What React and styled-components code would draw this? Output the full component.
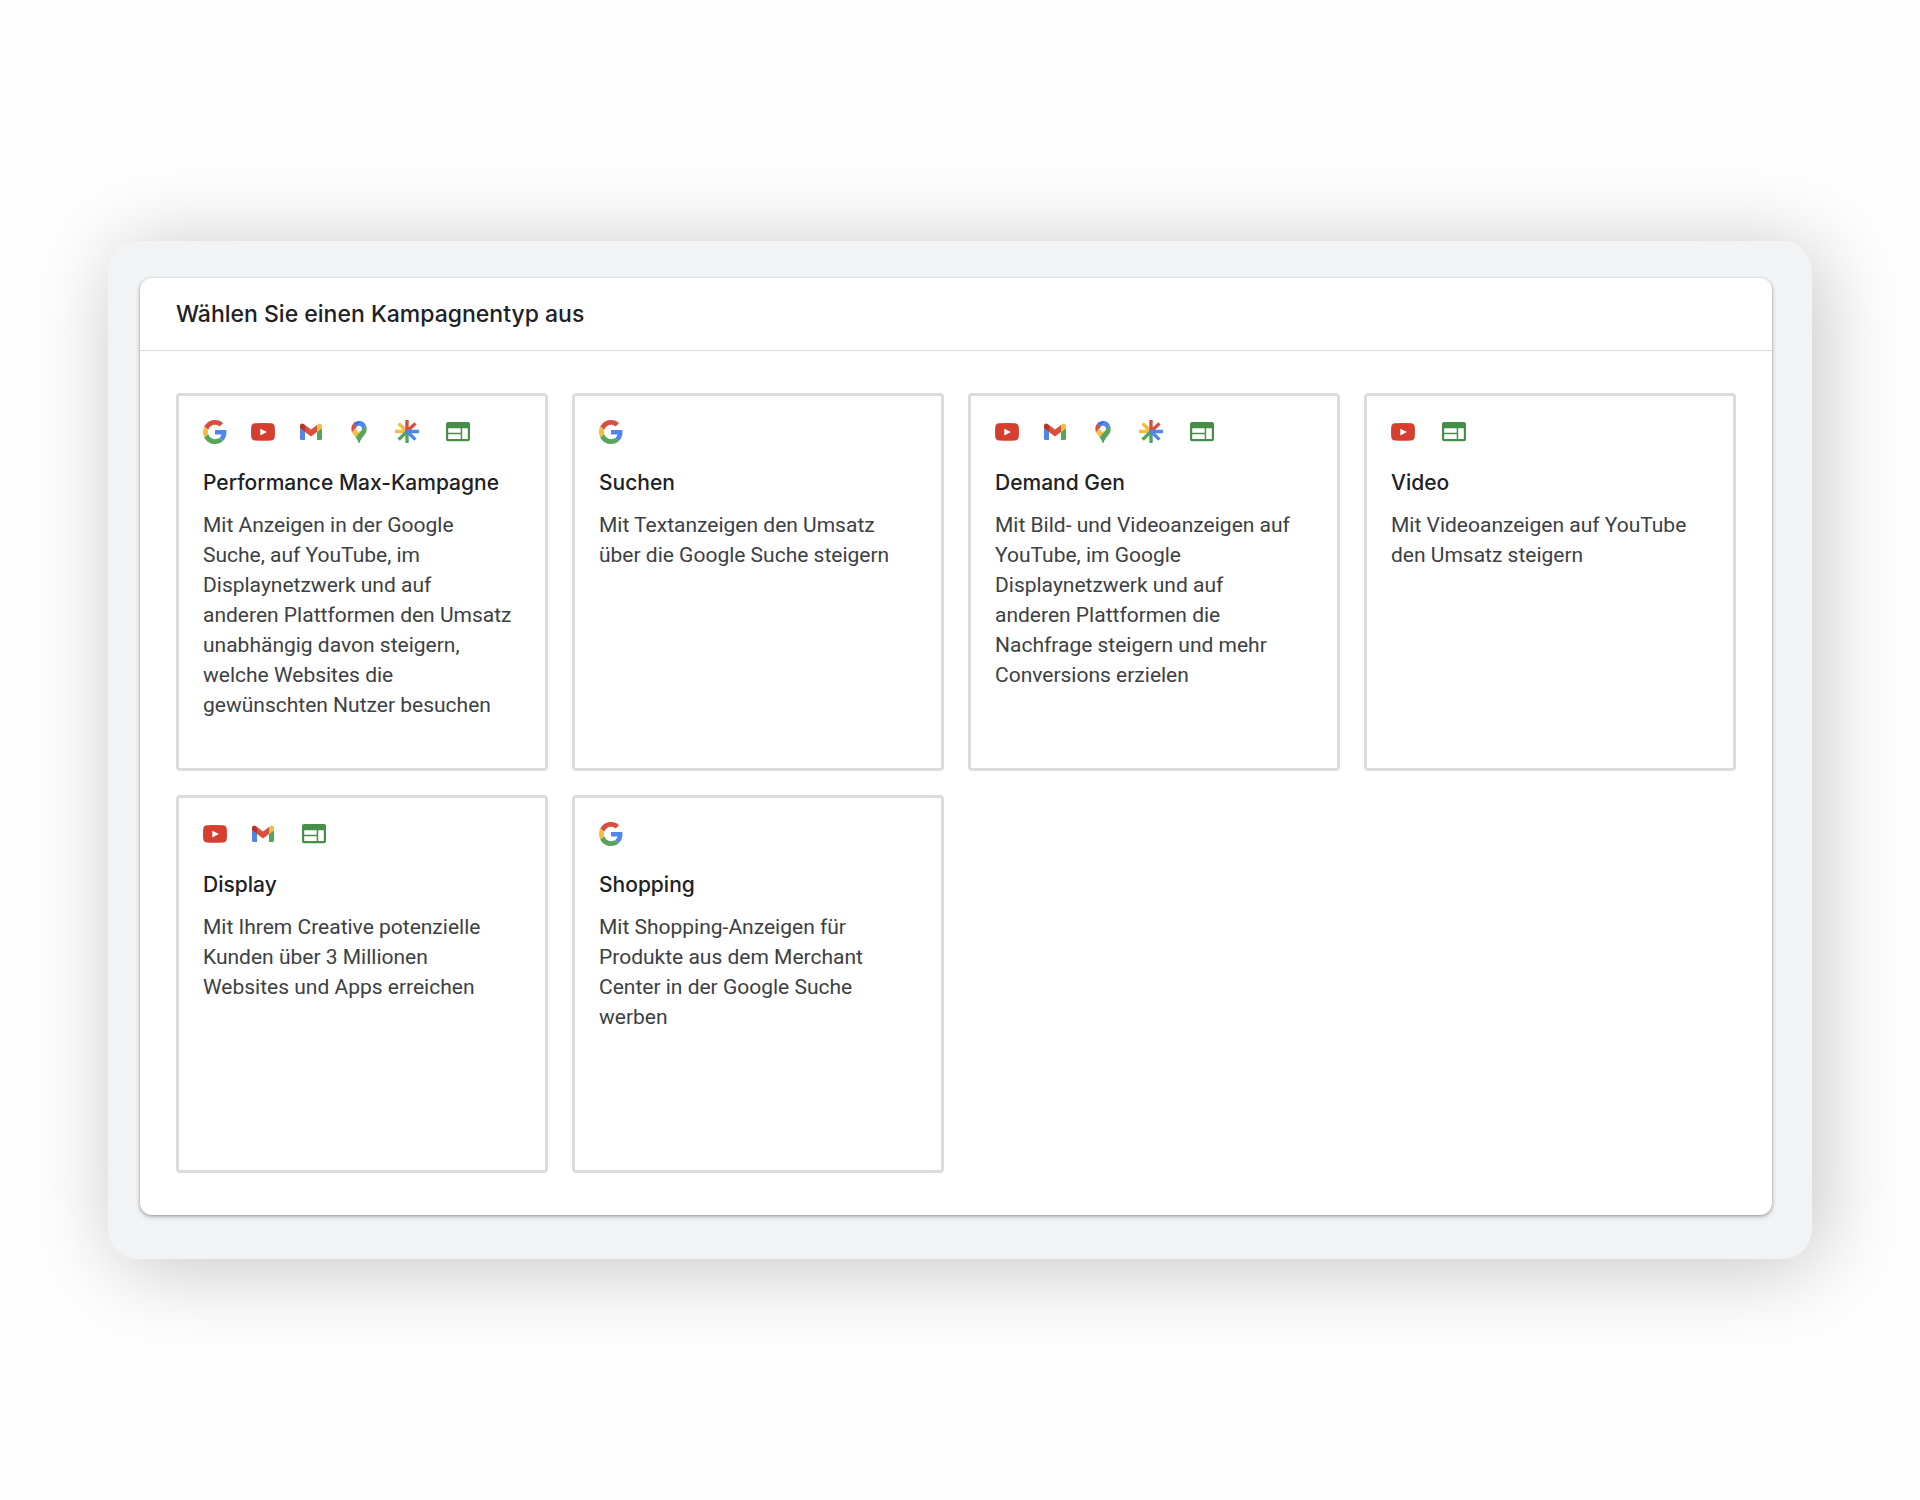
import React, { useState } from 'react'
import styled, { createGlobalStyle } from 'styled-components'

const colors = {
  red: '#d94f3d',
  darkRed: '#b8322a',
  yellow: '#f3bd42',
  green: '#57a55a',
  blue: '#5085ed',
  darkBlue: '#3a72e0',
  webGreen: '#458f48',
  title: '#202124',
  body: '#3c4043',
  line: '#dadce0',
}

const headingFont = '"Google Sans", Inter, sans-serif'

const GlobalStyle = createGlobalStyle`
  * {
    box-sizing: border-box;
  }
  body {
    margin: 0;
    background: #fefefe;
    font-family: Roboto, "Liberation Sans", sans-serif;
  }
`

const Page = styled.main`
  min-height: 100vh;
  display: flex;
  align-items: center;
  padding: 48px 108px;
`

const Frame = styled.div`
  flex: 1;
  min-width: 0;
  padding: 37px 40px 44px 32px;
  border-radius: 30px;
  background: #f1f3f5;
  box-shadow: 8px 8px 86px rgba(0, 0, 0, 0.23);
`

const Panel = styled.section`
  border-radius: 12px;
  background: #fff;
  box-shadow: 0 1px 3px rgba(60, 64, 67, 0.4), 0 2px 4px 1px rgba(60, 64, 67, 0.15);
`

const PanelHeader = styled.header`
  padding: 18px 36px;
  border-bottom: 1px solid ${colors.line};
`

const PanelTitle = styled.h1`
  margin: 0;
  font-family: ${headingFont};
  font-size: 23px;
  font-weight: 500;
  line-height: 36px;
  color: ${colors.title};
`

const CardGrid = styled.div`
  display: grid;
  grid-template-columns: repeat(4, minmax(0, 1fr));
  grid-auto-rows: minmax(378px, auto);
  gap: 24px;
  padding: 42px 36px;
`

const Card = styled.button`
  display: flex;
  flex-direction: column;
  align-items: flex-start;
  justify-content: flex-start;
  padding: 24px;
  border: 3px solid ${(props) => (props.$selected ? colors.blue : colors.line)};
  border-radius: 4px;
  background: #fff;
  font-family: inherit;
  text-align: left;
  cursor: pointer;
`

const IconRow = styled.span`
  display: flex;
  gap: 24px;
  height: 24px;
  margin-bottom: 24px;
`

const Icon = styled.svg`
  display: block;
  width: ${(props) => props.$width || 24}px;
  height: 24px;
`

const CardTitle = styled.span`
  margin-bottom: 12px;
  font-family: ${headingFont};
  font-size: 21px;
  font-weight: 500;
  line-height: 30px;
  color: ${colors.title};
`

const CardText = styled.span`
  max-width: 312px;
  font-size: 21px;
  line-height: 30px;
  color: ${colors.body};
`

const GoogleIcon = () => (
  <Icon viewBox="0 0 48 48" aria-hidden="true">
    <path fill={colors.red} d="M24 9.5c3.54 0 6.71 1.22 9.21 3.6l6.85-6.85C35.9 2.38 30.47 0 24 0 14.62 0 6.51 5.38 2.56 13.22l7.98 6.19C12.43 13.72 17.74 9.5 24 9.5z" />
    <path fill={colors.blue} d="M46.98 24.55c0-1.57-.15-3.09-.38-4.55H24v9.02h12.94c-.58 2.96-2.26 5.48-4.78 7.18l7.73 6c4.51-4.18 7.09-10.36 7.09-17.65z" />
    <path fill={colors.yellow} d="M10.53 28.59c-.48-1.45-.76-2.99-.76-4.59s.27-3.14.76-4.59l-7.98-6.19C.92 16.46 0 20.12 0 24s.92 7.54 2.56 10.78l7.97-6.19z" />
    <path fill={colors.green} d="M24 48c6.48 0 11.93-2.13 15.89-5.81l-7.73-6c-2.15 1.45-4.92 2.3-8.16 2.3-6.26 0-11.57-4.22-13.47-9.91l-7.98 6.19C6.51 42.62 14.62 48 24 48z" />
  </Icon>
)

const YouTubeIcon = () => (
  <Icon viewBox="0 0 24 24" aria-hidden="true">
    <path fill="#d63f2f" d="M4 3.3Q12 2.7 20 3.3Q23.4 3.5 23.7 6.5Q24.2 12 23.7 17.2Q23.4 20.2 20 20.5Q12 21.1 4 20.5Q.6 20.2.3 17.2Q-.2 12 .3 6.5Q.6 3.5 4 3.3z" />
    <path fill="#fff" d="M9.3 8.7l6.6 3.3-6.6 3.4z" />
  </Icon>
)

const GmailIcon = () => (
  <Icon viewBox="0 0 24 24" aria-hidden="true">
    <path fill={colors.blue} d="M1 8l5 3.7V20H2.5Q1 20 1 18.5z" />
    <path fill={colors.green} d="M23 8l-5 3.7V20h3.5q1.5 0 1.5-1.5z" />
    <path fill={colors.yellow} d="M18 5l1.3-1c1.6-1.2 3.7-.2 3.7 1.8V8.2l-5 3.7z" />
    <path fill={colors.red} d="M6 5l6 4.5L18 5v6.9l-6 4.5-6-4.5z" />
    <path fill={colors.darkRed} d="M1 5.8C1 3.8 3.1 2.8 4.7 4L6 5v6.9L1 8.2z" />
  </Icon>
)

const MapsIcon = () => (
  <Icon viewBox="-26 -6 144 144" aria-hidden="true">
    <path fill={colors.darkBlue} d="M60.2 2.2C55.8.8 51 0 46.1 0 32 0 19.3 6.4 10.8 16.5l21.8 18.3L60.2 2.2z" />
    <path fill={colors.red} d="M10.8 16.5C4.1 24.5 0 34.9 0 46.1c0 8.7 1.7 15.7 4.6 22l28-33.3-21.8-18.3z" />
    <path fill={colors.blue} d="M46.2 28.5c9.8 0 17.7 7.9 17.7 17.7 0 4.3-1.6 8.3-4.2 11.4 0 0 13.9-16.6 27.5-32.7-5.6-10.8-15.3-19-27-22.7L32.6 34.8c3.3-3.8 8.1-6.3 13.6-6.3" />
    <path fill={colors.yellow} d="M46.2 63.8c-9.8 0-17.7-7.9-17.7-17.7 0-4.3 1.5-8.3 4.1-11.3l-28 33.3c4.8 10.6 12.8 19.2 21 29.9l34.1-40.5c-3.3 3.9-8.1 6.3-13.5 6.3" />
    <path fill={colors.green} d="M59.1 109.2c15.4-24.1 33.3-35 33.3-63 0-7.7-1.9-14.9-5.2-21.3L25.6 98c2.6 3.4 5.3 7.3 7.9 11.3 9.4 14.5 6.8 23.1 12.8 23.1s3.4-8.7 12.8-23.2" />
  </Icon>
)

const DiscoverIcon = () => (
  <Icon viewBox="0 0 24 24" fill="none" strokeWidth="3.4" aria-hidden="true">
    <path stroke={colors.yellow} d="M0 11.5h12M3.6 3.6l8.4 7.9" />
    <path stroke={colors.green} d="M12 11.5V23M12 11.5l-8.4 8.1" />
    <path stroke={colors.red} d="M12 0v12M12 11.5l8.4-8.1" />
    <path stroke={colors.blue} d="M11 11.5H24M12 11.5l8.4 8.1" />
  </Icon>
)

const WebIcon = () => (
  <Icon $width={30} viewBox="0 0 30 24" aria-hidden="true">
    <path
      fill={colors.webGreen}
      fillRule="evenodd"
      d="M5 2h20a2 2 0 0 1 2 2v15.3a2 2 0 0 1-2 2H5a2 2 0 0 1-2-2V4a2 2 0 0 1 2-2zM5.2 8.2v4.6h12.5V8.2zM5.2 14.2v4.8h12.5v-4.8zM19.2 8.2V19h5.6V8.2z"
    />
  </Icon>
)

const icons = {
  google: GoogleIcon,
  youtube: YouTubeIcon,
  gmail: GmailIcon,
  maps: MapsIcon,
  discover: DiscoverIcon,
  web: WebIcon,
}

// \u00a0 keeps "anderen Plattformen" on one line
const campaignTypes = [
  {
    title: 'Performance Max-Kampagne',
    text: 'Mit Anzeigen in der Google Suche, auf YouTube, im Displaynetzwerk und auf anderen\u00a0Plattformen den Umsatz unabhängig davon steigern, welche Websites die gewünschten Nutzer besuchen',
    channels: ['google', 'youtube', 'gmail', 'maps', 'discover', 'web'],
  },
  {
    title: 'Suchen',
    text: 'Mit Textanzeigen den Umsatz über die Google Suche steigern',
    channels: ['google'],
  },
  {
    title: 'Demand Gen',
    text: 'Mit Bild- und Videoanzeigen auf YouTube, im Google Displaynetzwerk und auf anderen\u00a0Plattformen die Nachfrage steigern und mehr Conversions erzielen',
    channels: ['youtube', 'gmail', 'maps', 'discover', 'web'],
  },
  {
    title: 'Video',
    text: 'Mit Videoanzeigen auf YouTube den Umsatz steigern',
    channels: ['youtube', 'web'],
  },
  {
    title: 'Display',
    text: 'Mit Ihrem Creative potenzielle Kunden über 3 Millionen Websites und Apps erreichen',
    channels: ['youtube', 'gmail', 'web'],
  },
  {
    title: 'Shopping',
    text: 'Mit Shopping-Anzeigen für Produkte aus dem Merchant Center in der Google Suche werben',
    channels: ['google'],
  },
]

const App = () => {
  const [selected, setSelected] = useState(null)

  return (
    <Page>
      <GlobalStyle />
      <Frame>
        <Panel>
          <PanelHeader>
            <PanelTitle>Wählen Sie einen Kampagnentyp aus</PanelTitle>
          </PanelHeader>
          <CardGrid>
            {campaignTypes.map(({ title, text, channels }) => (
              <Card
                key={title}
                type="button"
                $selected={selected === title}
                aria-pressed={selected === title}
                onClick={() => setSelected(title)}
              >
                <IconRow>
                  {channels.map((name) => {
                    const ChannelIcon = icons[name]
                    return <ChannelIcon key={name} />
                  })}
                </IconRow>
                <CardTitle>{title}</CardTitle>
                <CardText>{text}</CardText>
              </Card>
            ))}
          </CardGrid>
        </Panel>
      </Frame>
    </Page>
  )
}

export default App
